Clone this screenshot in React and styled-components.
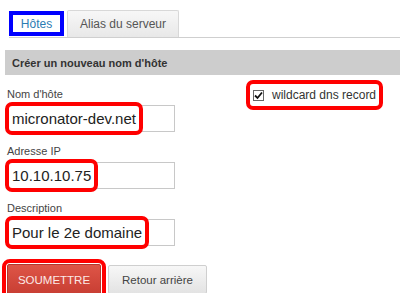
import React from 'react';
import styled, { createGlobalStyle } from 'styled-components';

const GlobalStyle = createGlobalStyle`
    *, *::before, *::after { box-sizing: border-box; }
    body {
        margin: 0;
        background: #fff;
        font-family: "Liberation Sans", Arial, sans-serif;
    }
`;

const Page = styled.div`
    width: 400px;
    height: 293px;
    overflow: hidden;
    padding-top: 10px;
`;

const TabList = styled.div`
    display: flex;
    align-items: flex-end;
    height: 28px;
    margin-left: 9px;
    border-bottom: 1px solid #cfcfcf;
`;

const Tab = styled.div`
    display: flex;
    align-items: center;
    justify-content: center;
    font-size: 12px;
    background: ${p => (p.$active ? '#fff' : 'linear-gradient(#f7f7f7, #e8e8e8)')};
    color: ${p => (p.$active ? '#2b7cb3' : '#555')};
    border: ${p => (p.$active ? '4px solid #0000ff' : '1px solid #d8d8d8')};
    border-bottom: ${p => (p.$active ? '4px solid #0000ff' : 'none')};
    border-radius: ${p => (p.$active ? '0' : '2px 2px 0 0')};
    height: ${p => (p.$active ? '25px' : '27px')};
    width: ${p => (p.$active ? '55px' : 'auto')};
    padding: ${p => (p.$active ? '0' : '0 12px')};
    margin-bottom: ${p => (p.$active ? '1px' : '0')};
    margin-left: ${p => (p.$active ? '0' : '3px')};
`;

const SectionTitle = styled.div`
    margin: 12px 0 0 5px;
    height: 25px;
    display: flex;
    align-items: center;
    padding-left: 7px;
    background: #cdcdcd;
    color: #333;
    font-size: 11px;
    font-weight: bold;
`;

const Body = styled.div`
    display: flex;
    padding-left: 7px;
`;

const LeftCol = styled.div`
    width: 239px;
    padding-top: 13px;
`;

const RightCol = styled.div`
    padding-top: 5px;
`;

const FieldGroup = styled.div`
    margin-bottom: 13px;
`;

const Label = styled.div`
    font-size: 11px;
    line-height: 13px;
    color: #444;
    margin-bottom: 4px;
`;

const FieldBox = styled.div`
    position: relative;
    width: 168px;
    height: 27px;
    border: 1px solid #c8c8c8;
    background: #fff;
`;

const Mark = styled.span`
    position: absolute;
    left: -3px;
    top: -4px;
    bottom: -4px;
    display: flex;
    align-items: center;
    padding: 0 3px;
    border: 4px solid #f00;
    border-radius: 7px;
    background: #fff;
    color: #222;
    font-size: 15px;
    white-space: nowrap;
`;

const CheckAnnot = styled.label`
    display: flex;
    align-items: center;
    gap: 8px;
    height: 30px;
    padding: 0 3px 0 3px;
    border: 4px solid #f00;
    border-radius: 7px;
    font-size: 12px;
    color: #333;
    white-space: nowrap;
`;

const CheckBox = styled.span`
    display: flex;
    align-items: center;
    justify-content: center;
    width: 11px;
    height: 11px;
    border: 1px solid #666;
    background: #fff;
`;

const ButtonRow = styled.div`
    display: flex;
    align-items: center;
    margin: 6px 0 0 -5px;
`;

const SubmitMark = styled.span`
    display: flex;
    padding: 1px;
    border: 4px solid #f00;
    border-radius: 8px;
`;

const Button = styled.button`
    font-family: inherit;
    font-size: 11.5px;
    border-radius: 2px;
    cursor: pointer;
    height: ${p => (p.$primary ? '31px' : '29px')};
    width: ${p => (p.$primary ? '94px' : '99px')};
    color: ${p => (p.$primary ? '#fbe9e7' : '#444')};
    background: ${p => (p.$primary ? 'linear-gradient(#de5547, #c83e33)' : 'linear-gradient(#f7f7f7, #e3e3e3)')};
    border: 1px solid ${p => (p.$primary ? '#b5372d' : '#cfcfcf')};
    margin-left: ${p => (p.$primary ? '0' : '2px')};
    padding: 0;
`;

const fields = [
    { label: "Nom d'hôte", value: 'micronator-dev.net' },
    { label: 'Adresse IP', value: '10.10.10.75' },
    { label: 'Description', value: 'Pour le 2e domaine' },
];

export default function App() {
    return (
        <Page>
            <GlobalStyle />
            <TabList>
                <Tab $active>Hôtes</Tab>
                <Tab>Alias du serveur</Tab>
            </TabList>
            <SectionTitle>Créer un nouveau nom d'hôte</SectionTitle>
            <Body>
                <LeftCol>
                    {fields.map(f => (
                        <FieldGroup key={f.label}>
                            <Label>{f.label}</Label>
                            <FieldBox>
                                <Mark>{f.value}</Mark>
                            </FieldBox>
                        </FieldGroup>
                    ))}
                    <ButtonRow>
                        <SubmitMark>
                            <Button $primary>SOUMETTRE</Button>
                        </SubmitMark>
                        <Button>Retour arrière</Button>
                    </ButtonRow>
                </LeftCol>
                <RightCol>
                    <CheckAnnot>
                        <CheckBox>
                            <svg width="9" height="9" viewBox="0 0 9 9">
                                <path d="M1 4.5 L3.5 7 L8 1.5" fill="none" stroke="#111" strokeWidth="1.8" />
                            </svg>
                        </CheckBox>
                        wildcard dns record
                    </CheckAnnot>
                </RightCol>
            </Body>
        </Page>
    );
}
